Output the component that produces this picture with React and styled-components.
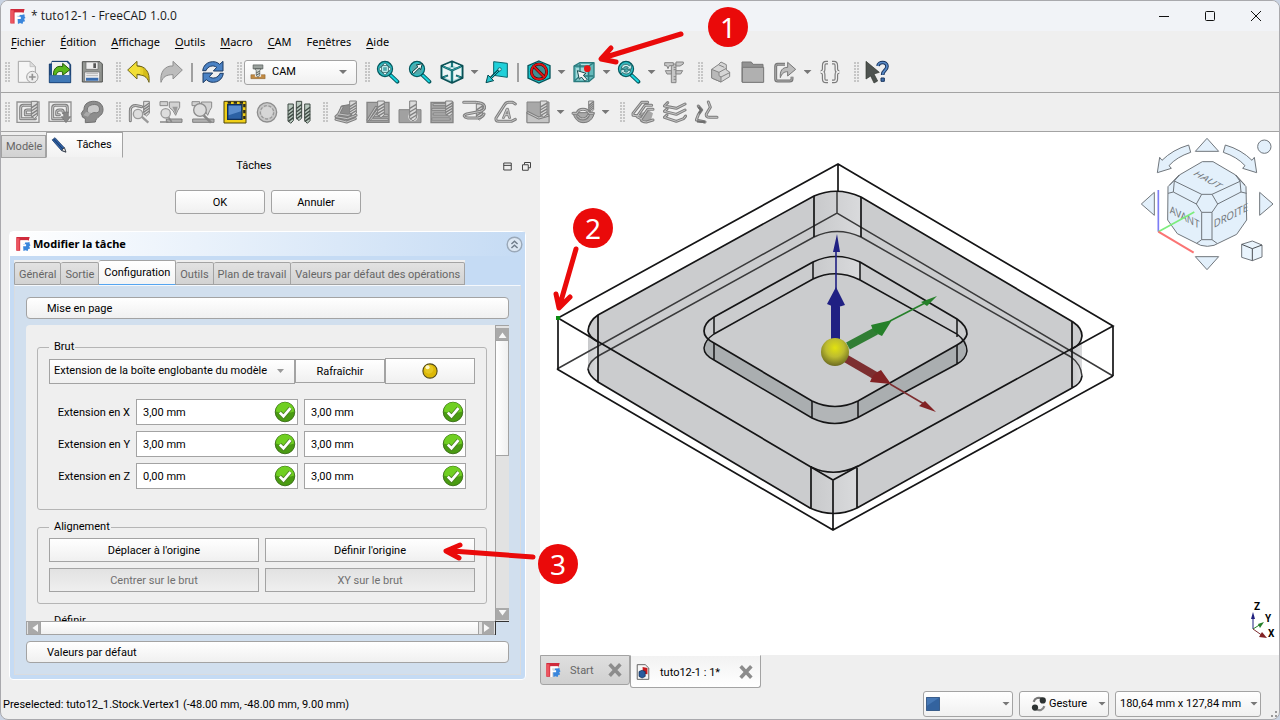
import React from 'react';
import styled, { createGlobalStyle, css } from "styled-components";

const menus = [
    ["", "F", "ichier"],
    ["", "É", "dition"],
    ["", "A", "ffichage"],
    ["", "O", "utils"],
    ["", "M", "acro"],
    ["", "C", "AM"],
    ["Fe", "n", "êtres"],
    ["", "A", "ide"],
];

const jobTabs = ["Général", "Sortie", "Configuration", "Outils", "Plan de travail", "Valeurs par défaut des opérations"];

const extensions = [
    { axis: "X", neg: "3,00 mm", pos: "3,00 mm" },
    { axis: "Y", neg: "3,00 mm", pos: "3,00 mm" },
    { axis: "Z", neg: "0,00 mm", pos: "3,00 mm" },
];

// Toolbar entries: "|" is a separator, ":" a grip, a trailing "+" adds a drop-down arrow
const viewTools = [":", "fit", "zoomSel", "iso+", "plane", "|", "drawStyle+", "pick+", "sync+", "caliper", ":", "part", "folder", "share+", "braces", ":", "whatsThis"];
const camTools = ["job", "exportJob", "sanity", ":", "inspect", "simulator", "simulatorGl", "stock", "loop", "bits", ":", "profile", "pocket", "drill", "face", "helix", "engrave", "pocket3d+", "vcarve+", ":", "dressup1", "dressup2", "dressup3"];

const Bit = ({ x, y, w = 18, h = 54, light }) => (
    <g stroke={light ? "#3f4a44" : "#808080"} strokeWidth="3">
        <path d={`M${x} ${y}h${w}v${h - 8}l${-w / 2} 8l${-w / 2} -8z`} fill={light ? "#b9c9bf" : "#dcdcdc"} />
        {[0.32, 0.5, 0.68, 0.86].map((k) => (
            <path key={k} d={`M${x} ${y + h * k + 3}l${w} -12`} strokeWidth="4" />
        ))}
    </g>
);

const Lens = ({ children }) => (
    <>
        <path d="M42 44L64 65" stroke="#075a60" strokeWidth="12" strokeLinecap="round" />
        <path d="M44 46L63 64" stroke="#18d3dc" strokeWidth="6" strokeLinecap="round" />
        <circle cx="27" cy="27" r="22" fill="#51a9ac" stroke="#075a60" strokeWidth="5" />
        <circle cx="27" cy="27" r="19" fill="none" stroke="#20cdd4" strokeWidth="3" />
        {children}
    </>
);

const Tube = ({ d }) => (
    <>
        <path d={d} fill="none" stroke="#808080" strokeWidth="9" strokeLinecap="round" strokeLinejoin="round" />
        <path d={d} fill="none" stroke="#c6c6c6" strokeWidth="3" strokeLinecap="round" strokeLinejoin="round" />
    </>
);

const icons = {
    newFile: (
        <>
            <path d="M7 4H42L58 20V67H7Z" fill="#f5f5f5" stroke="#a5a5a5" strokeWidth="3" />
            <path d="M42 4V20H58Z" fill="#ddd" stroke="#b5b5b5" strokeWidth="2" />
            <circle cx="49" cy="51" r="17" fill="#ededed" stroke="#a2a2a2" strokeWidth="3" />
            <path d="M49 41V61M39 51H59" stroke="#929292" strokeWidth="5" />
        </>
    ),
    open: (
        <>
            <path d="M4 12H12V4H60L68 14V68H4Z" fill="#1f4f8c" stroke="#123a6b" strokeWidth="3" />
            <path d="M12 6H56L64 14V46H12Z" fill="#f0f1f0" />
            <path d="M16 46C16 24 28 16 44 20V10L66 29L44 46V36C34 32 26 36 24 46Z" fill="#59b81b" stroke="#245b0b" strokeWidth="3" />
            <path d="M5 46H67V67H5Z" fill="#3f78b6" />
        </>
    ),
    save: (
        <>
            <path d="M7 5H60L67 12V66H7Z" fill="#939692" stroke="#4e504e" strokeWidth="3" strokeLinejoin="round" />
            <path d="M18 6H54V28H18Z" fill="#eee" stroke="#666" strokeWidth="2" />
            <path d="M40 10H48V24H40Z" fill="#555" />
            <path d="M14 36H59V64H14Z" fill="#f2f2f2" stroke="#666" strokeWidth="2" />
            <path d="M19 41H54M19 47H54" stroke="#b6b6b6" strokeWidth="3" />
            <path d="M18 53H55V62H18Z" fill="#386caf" />
        </>
    ),
    undo: (
        <>
            <path d="M28 18C54 16 70 36 66 67C60 50 50 44 28 44Z" fill="#d5bd18" stroke="#70661d" strokeWidth="3" />
            <path d="M2 30L30 4V18L44 20V44L30 43V57Z" fill="#f2df35" stroke="#70661d" strokeWidth="3" strokeLinejoin="round" />
            <path d="M42 21C49 23 50 30 48 44H40V22Z" fill="#e8d02a" />
        </>
    ),
    redo: <path d="M70 30L42 4V18C18 16 2 36 6 67C12 50 22 44 42 44V57Z" fill="#bcbcbc" stroke="#8e8e8e" strokeWidth="3" strokeLinejoin="round" />,
    refresh: (
        <g fill="#4b82c4" stroke="#1d3b63" strokeWidth="3" strokeLinejoin="round">
            <path d="M5 32C8 4 42 -2 56 13L66 4V33H37L47 22C37 14 20 18 15 32Z" />
            <path d="M67 40C64 68 30 74 16 59L6 68V39H35L25 50C35 58 52 54 57 40Z" />
        </g>
    ),
    cam: (
        <>
            <path d="M4 48H68V66H4Z" fill="#c18a43" stroke="#74501f" strokeWidth="2" />
            <path d="M22 44H50V57H22Z" fill="#eee" />
            <path d="M14 4H58V22H14Z" fill="#9aa19d" stroke="#4d5350" strokeWidth="3" />
            <path d="M22 22H50L44 30V50L36 60L28 50V30Z" fill="#d0d6d2" stroke="#4d5350" strokeWidth="3" />
            <path d="M28 40L44 32M28 50L44 42" stroke="#4d5350" strokeWidth="4" />
        </>
    ),
    fit: (
        <Lens>
            <path d="M27 8L35 17H19ZM27 46L35 37H19ZM8 27L17 19V35ZM46 27L37 19V35Z" fill="#e4fbfb" stroke="#0b3d40" strokeWidth="2" />
            <path d="M20 20H34V34H20Z" fill="none" stroke="#d7f5f5" strokeWidth="3" />
        </Lens>
    ),
    zoomSel: (
        <Lens>
            <path d="M12 36L30 20L25 15L43 11L38 29L34 24L17 41Z" fill="#f4f7f7" stroke="#0b3d40" strokeWidth="3" />
        </Lens>
    ),
    iso: (
        <>
            <path d="M36 4L68 17V54L36 69L4 54V17Z" fill="#9bd5d6" stroke="#0b5055" strokeWidth="5" strokeLinejoin="round" />
            <path d="M11 17L32 9V18L20 23ZM61 17L40 9V18L52 23ZM36 24L44 26L36 29L28 26Z" fill="#eef5f5" />
            <path d="M9 24L31 34V60L9 51ZM63 24L41 34V60L63 51Z" fill="#eef5f5" />
            <path d="M4 17L36 31L68 17M36 31V69M36 4V21M4 54L24 46M68 54L48 46" fill="none" stroke="#0b5055" strokeWidth="6" />
            <path d="M36 8V20M10 52L22 47M62 52L50 47M36 34V64M9 19L36 31L63 19" fill="none" stroke="#3dcfd5" strokeWidth="2" />
        </>
    ),
    plane: (
        <>
            <path d="M26 5L67 10V52L26 46Z" fill="#1fd0d9" stroke="#08656c" strokeWidth="3" />
            <path d="M44 28L14 57" stroke="#064a50" strokeWidth="8" />
            <path d="M42 30L16 56" stroke="#27c5cd" strokeWidth="3" />
            <path d="M3 68L9 45L26 62Z" fill="#27c5cd" stroke="#064a50" strokeWidth="3" />
            <circle cx="44" cy="28" r="5" fill="#b4f3f5" stroke="#064a50" strokeWidth="2" />
        </>
    ),
    drawStyle: (
        <>
            <path d="M36 3L69 17V54L36 69L3 54V17Z" fill="#16c5cd" stroke="#07545a" strokeWidth="4" />
            <circle cx="36" cy="35" r="23" fill="#3f8f93" stroke="#3b0505" strokeWidth="9" />
            <circle cx="36" cy="35" r="23" fill="none" stroke="#de1616" strokeWidth="6" />
            <path d="M21 20L51 50" stroke="#3b0505" strokeWidth="9" />
            <path d="M20 19L52 51" stroke="#de1616" strokeWidth="6" />
        </>
    ),
    pick: (
        <>
            <path d="M6 18L24 8H66V52L50 65H6Z" fill="#65b9bb" stroke="#2a7b7e" strokeWidth="4" strokeLinejoin="round" />
            <path d="M12 24H44V59H12Z" fill="#a5dadb" />
            <path d="M26 12H60L48 18H14Z" fill="#b5e2e3" />
            <path d="M6 18H50V65M50 18L66 8M24 12V48L8 62M24 48H64" fill="none" stroke="#2a7b7e" strokeWidth="4" />
            <path d="M16 32L42 40L34 46L45 58L39 64L28 51L22 58Z" fill="#f5f5f5" stroke="#184d50" strokeWidth="3" />
            <circle cx="46" cy="26" r="10" fill="#e71616" />
        </>
    ),
    sync: (
        <Lens>
            <path d="M13 25C14 13 31 9 37 18L43 13V27H29L34 22C27 17 21 20 19 25ZM41 31C39 43 24 45 17 37L12 42V29H25L21 34C28 39 33 36 35 31Z" fill="#d5f4f4" stroke="#08494d" strokeWidth="2" />
        </Lens>
    ),
    caliper: (
        <g fill="#c6c6c6" stroke="#858585" strokeWidth="3">
            <path d="M28 12H42V68H28Z" />
            <path d="M8 8H34V17H22L18 26L14 17H8ZM42 6H64V12L54 18H42ZM28 32H10L15 42H28ZM42 32H62L56 42H42Z" />
            <path d="M35 22H42M35 29H42M35 50H42M35 58H42" />
        </g>
    ),
    part: (
        <g stroke="#858585" strokeWidth="3" strokeLinejoin="round">
            <path d="M8 28L28 14L36 6L52 14V30L62 36V50L36 66L8 54Z" fill="#d6d6d6" />
            <path d="M8 28L30 37V47L36 51V66L8 54Z" fill="#b9b9b9" />
            <path d="M30 37L52 25M36 51L62 38M28 14L46 22" fill="none" />
        </g>
    ),
    folder: (
        <g stroke="#777" strokeWidth="3">
            <path d="M3 6H31L36 13H66V66H3Z" fill="#929292" />
            <path d="M4 22H68V67H4Z" fill="#b0b0b0" />
        </g>
    ),
    share: (
        <>
            <path d="M36 13H14Q8 13 8 20V57Q8 63 14 63H50Q57 63 57 57V50" fill="none" stroke="#777" strokeWidth="9" />
            <path d="M36 13H14Q8 13 8 20V57Q8 63 14 63H50Q57 63 57 57V50" fill="none" stroke="#a8a8a8" strokeWidth="3" />
            <path d="M22 53C20 32 28 22 44 22V7L68 28L44 48V35C34 35 26 40 22 53Z" fill="#bcbcbc" stroke="#777" strokeWidth="3" />
        </>
    ),
    braces: (
        <>
            <path d="M30 8H24Q17 8 17 17V28Q17 36 8 36Q17 36 17 44V56Q17 64 24 64H30M42 8H48Q55 8 55 17V28Q55 36 64 36Q55 36 55 44V56Q55 64 48 64H42" fill="none" stroke="#7c7c7c" strokeWidth="11" />
            <path d="M30 8H24Q17 8 17 17V28Q17 36 8 36Q17 36 17 44V56Q17 64 24 64H30M42 8H48Q55 8 55 17V28Q55 36 64 36Q55 36 55 44V56Q55 64 48 64H42" fill="none" stroke="#efefef" strokeWidth="4" />
        </>
    ),
    whatsThis: (
        <>
            <path d="M3 4L43 37L27 42L38 63L27 69L17 48L3 57Z" fill="#4e5350" stroke="#31362f" strokeWidth="2" />
            <path d="M39 18C40 5 66 3 66 19C66 33 53 30 53 45" fill="none" stroke="#19345d" strokeWidth="11" />
            <path d="M39 18C40 5 66 3 66 19C66 33 53 30 53 44" fill="none" stroke="#5889c6" strokeWidth="5" />
            <path d="M48 54H58V64H48Z" fill="#4271ae" stroke="#19345d" strokeWidth="3" />
        </>
    ),
    job: (
        <>
            <path d="M3 6H69V67H3Z" fill="#ececec" stroke="#929292" strokeWidth="4" />
            <Tube d="M14 55V24Q14 16 22 16H46M14 56H58M28 44V34Q28 30 34 30H48M28 44H46" />
            <Bit x={46} y={4} h={52} />
        </>
    ),
    exportJob: (
        <>
            <path d="M3 6H69V64H3Z" fill="#ececec" stroke="#929292" strokeWidth="4" />
            <Tube d="M44 56H14V24Q14 16 22 16H52Q58 16 58 24V36M34 44H26V36Q26 30 34 30H40Q46 30 46 38" />
            <path d="M47 36H61V50H68L54 68L40 50H47Z" fill="#888" stroke="#767676" strokeWidth="2" />
        </>
    ),
    sanity: (
        <>
            <path d="M16 68V56Q4 52 6 46L4 40L12 28C12 10 28 3 44 4C62 5 70 18 69 31C68 50 48 49 46 66Z" fill="#8d8d8d" stroke="#707070" strokeWidth="3" />
            <path d="M22 32C20 18 34 12 48 14C60 16 60 30 56 36C48 42 42 34 36 40C30 44 24 40 22 32Z" fill="#c9c9c9" stroke="#777" strokeWidth="3" />
            <path d="M18 36L33 38L24 50L10 46Z" fill="#aaa" />
        </>
    ),
    inspect: (
        <>
            <Tube d="M10 62V32Q10 15 30 17L44 20" />
            <Bit x={50} y={4} w={17} h={44} />
            <path d="M44 50L64 68" stroke="#9a9a9a" strokeWidth="7" />
            <circle cx="33" cy="42" r="14" fill="#ddd" stroke="#9a9a9a" strokeWidth="4" />
        </>
    ),
    simulator: (
        <>
            <path d="M3 5H26V17H3ZM31 6H62V22L56 32L50 46L42 32L31 22Z" fill="#d2d2d2" stroke="#8a8a8a" strokeWidth="3" />
            <path d="M40 20H56L50 42Z" fill="#999" />
            <path d="M22 57H69V67H22Z" fill="#b0b0b0" stroke="#808080" strokeWidth="3" />
            <circle cx="20" cy="40" r="14" fill="#ddd" stroke="#9b9b9b" strokeWidth="4" />
            <path d="M29 52L38 66M3 66H28" stroke="#888" strokeWidth="5" />
        </>
    ),
    simulatorGl: (
        <>
            <path d="M3 5H26V17H3ZM31 6H62V22L56 32L50 46L42 32L31 22Z" fill="#d2d2d2" stroke="#8a8a8a" strokeWidth="3" />
            <path d="M5 57H69V67H5Z" fill="#b0b0b0" stroke="#808080" strokeWidth="3" />
            <path d="M38 46L60 68" stroke="#888" strokeWidth="8" />
            <circle cx="27" cy="30" r="19" fill="#ddd" stroke="#8c8c8c" strokeWidth="4" />
        </>
    ),
    stock: (
        <>
            <path d="M3 4H69V69H3Z" fill="#f0cf19" stroke="#4b420b" strokeWidth="3" />
            <path d="M14 8H64V57" fill="none" stroke="#2b2b20" strokeWidth="7" strokeDasharray="10 8" />
            <path d="M14 14H57V58H14Z" fill="#2c61a4" stroke="#102f59" strokeWidth="4" />
            <path d="M17 17H54V34L17 46Z" fill="#5b8dcc" />
        </>
    ),
    loop: (
        <>
            <circle cx="36" cy="37" r="29" fill="#c8c8c8" stroke="#8d8d8d" strokeWidth="4" />
            <circle cx="36" cy="37" r="20" fill="none" stroke="#999" strokeWidth="4" strokeDasharray="9 5" />
            <circle cx="36" cy="37" r="17" fill="#d6d6d6" />
        </>
    ),
    bits: (
        <>
            <Bit light x={3} y={12} w={16} h={58} />
            <Bit light x={28} y={4} w={16} h={58} />
            <Bit light x={53} y={12} w={16} h={58} />
        </>
    ),
    profile: (
        <>
            <path d="M22 18L56 12V46L40 56L10 52Z" fill="#8c8c8c" stroke="#777" strokeWidth="3" />
            <Tube d="M24 22L14 42L42 46L64 38M14 42L6 50L40 56L66 46M6 58L38 66L64 56" />
            <Bit x={47} y={3} w={20} h={44} />
        </>
    ),
    pocket: (
        <>
            <path d="M3 7H69V67H3Z" fill="#a6a6a6" stroke="#848484" strokeWidth="4" />
            <Tube d="M6 60L30 22M14 58L38 26M28 46H64M18 58H64" />
            <Bit x={35} y={3} w={20} h={50} />
        </>
    ),
    drill: (
        <>
            <path d="M3 29H69V68H3Z" fill="#a1a1a1" stroke="#858585" strokeWidth="3" />
            <circle cx="45" cy="50" r="14" fill="#eee" />
            <Bit x={35} y={3} w={20} h={60} />
        </>
    ),
    face: (
        <>
            <path d="M3 7H69V68H3Z" fill="#a6a6a6" stroke="#848484" strokeWidth="4" />
            <Tube d="M12 14H48M8 28H48M12 42H56M8 57H58" />
            <Bit x={47} y={3} w={20} h={46} />
        </>
    ),
    helix: (
        <>
            <Bit x={43} y={12} w={18} h={48} />
            <Tube d="M5 7H40C74 8 74 28 56 34L14 42C2 46 6 52 18 54H48C58 52 64 48 66 42" />
        </>
    ),
    engrave: (
        <>
            <Tube d="M64 12L56 7H44Q36 7 32 14L6 54Q4 64 14 64H52L64 58" />
            <path d="M25 55L37 25H43L50 55H44L42 47H34L31 55ZM36 41H42L40 34Z" fill="#c6c6c6" stroke="#858585" strokeWidth="3" />
        </>
    ),
    pocket3d: (
        <>
            <path d="M3 6H69V68H3Z" fill="#a8a8a8" stroke="#858585" strokeWidth="3" />
            <path d="M3 36L36 56L69 48V68H3Z" fill="#c5c5c5" stroke="#858585" strokeWidth="3" />
            <Tube d="M6 38L38 54L66 46" />
            <Bit x={43} y={3} w={20} h={48} />
        </>
    ),
    vcarve: (
        <>
            <path d="M6 38H70C66 58 54 68 36 68C20 67 10 56 6 38Z" fill="#aaa" stroke="#777" strokeWidth="3" />
            <Tube d="M6 40H18C22 24 50 24 54 40H66M20 48C26 60 46 60 52 46" />
            <Bit x={53} y={3} w={15} h={34} />
        </>
    ),
    dressup1: (
        <>
            <path d="M26 40L54 32L66 40L60 60L40 64L22 52Z" fill="#a6a6a6" />
            <Tube d="M50 7H32L6 40V46L28 48M62 16H42L18 50L30 56M66 28H50L30 58Q32 66 46 66L66 60" />
        </>
    ),
    dressup2: <Tube d="M14 8L4 18L40 25L66 12M12 27L4 34L40 43L66 30M12 45L4 52L40 64L62 56L68 48" />,
    dressup3: (
        <>
            <Tube d="M10 18L20 30L10 44L4 60L30 66M40 6L46 22L34 42Q32 52 44 52H66" />
            <path d="M6 64L30 66M10 20L18 30L12 40" stroke="#6f6f6f" strokeWidth="7" />
        </>
    ),
    logo: (
        <>
            <path d="M6 4H66L62 20H26V66H6Z" fill="#cf2a3b" />
            <path d="M6 10H20V64H6Z" fill="#ec5560" />
            <path d="M36 36H44L46 28H66V36L70 42L64 46L68 56L60 58L57 68L47 64L38 68Z" fill="#3a86dc" />
            <path d="M28 67V24H58M28 42H50" stroke="#fff" strokeWidth="9" />
        </>
    ),
    pencil: (
        <>
            <path d="M5 13L18 3L60 48L67 68L47 61Z" fill="#2d5fa5" stroke="#16325b" strokeWidth="3" />
            <path d="M12 9L53 54" stroke="#17365f" strokeWidth="4" />
            <path d="M48 60L60 48L67 68Z" fill="#f0f0f0" stroke="#222" strokeWidth="3" />
        </>
    ),
    check: (
        <>
            <circle cx="36" cy="36" r="32" fill="#4a9b12" stroke="#386c15" strokeWidth="3" />
            <path d="M6 34A30 30 0 0 1 66 34Q36 46 6 34Z" fill="#70cf22" />
            <path d="M19 38L31 50L54 23" fill="none" stroke="#4c7f24" strokeWidth="14" />
            <path d="M19 38L31 50L54 23" fill="none" stroke="#fff" strokeWidth="9" />
        </>
    ),
    ball: (
        <>
            <circle cx="36" cy="36" r="32" fill="#dcb808" stroke="#544b16" strokeWidth="5" />
            <circle cx="31" cy="28" r="20" fill="#e6c822" />
            <circle cx="25" cy="19" r="9" fill="#fdf7c8" />
        </>
    ),
    collapse: (
        <>
            <circle cx="36" cy="36" r="31" fill="#dce7f3" stroke="#9aa8b8" strokeWidth="6" />
            <path d="M23 34L36 22L49 34M23 51L36 39L49 51" fill="none" stroke="#6f7c8a" strokeWidth="6" />
        </>
    ),
    document: (
        <>
            <path d="M10 3H46L62 18V69H10Z" fill="#f7f7f7" stroke="#555" strokeWidth="4" />
            <path d="M34 14L56 18V46L36 44Z" fill="#c7191d" />
            <path d="M18 34L32 28L46 34V56L32 63L18 56Z" fill="#285b9e" stroke="#0e2a50" strokeWidth="3" />
        </>
    ),
    close: <path d="M12 10L60 62M60 10L12 62" stroke="#8c8c8c" strokeWidth="16" />,
    gesture: (
        <>
            <path d="M12 26C18 8 36 4 50 12" fill="none" stroke="#777" strokeWidth="10" />
            <path d="M60 46C54 64 38 68 24 60" fill="none" stroke="#888" strokeWidth="10" />
            <circle cx="53" cy="20" r="14" fill="#2c3232" />
            <circle cx="18" cy="52" r="14" fill="#2c3232" />
        </>
    ),
    blueSquare: (
        <>
            <path d="M2 2H70V70H2Z" fill="#33639f" stroke="#1b4273" strokeWidth="4" />
            <path d="M5 5H66L5 45Z" fill="#4678b5" />
        </>
    ),
    restore: <path d="M20 20V4H68V46H50M4 22H50V66H4Z" fill="none" stroke="#444" strokeWidth="8" />,
    dock: <path d="M6 8H66V64H6ZM6 27H66" fill="none" stroke="#444" strokeWidth="8" />,
};

const Icon = ({ name, size = 24 }) => (
    <Svg width={size} height={size} viewBox="0 0 72 72" fill="none" aria-hidden="true">{icons[name]}</Svg>
);

const Tools = ({ items }) => items.map((item, index) => {
    if (item === "|") return <Separator key={index} />;
    if (item === ":") return <Grip key={index} />;
    const name = item.replace("+", "");
    return (
        <React.Fragment key={index}>
            <ToolButton aria-label={name}><Icon name={name} /></ToolButton>
            {item !== name && <ArrowButton aria-label={`${name} menu`}><Arrow /></ArrowButton>}
        </React.Fragment>
    );
});

const Scene = () => (
    <SceneSvg viewBox="540 132 739 523" role="img" aria-label="Pièce et brut">
        <defs>
            <linearGradient id="wall" x1="0" x2="1">
                <stop offset="0" stopColor="#c8c9cb" />
                <stop offset="1" stopColor="#d9dadc" />
            </linearGradient>
            <radialGradient id="sphere" cx="0.5" cy="0.35" r="0.65">
                <stop offset="0" stopColor="#e2e20f" />
                <stop offset="0.5" stopColor="#bdbc30" />
                <stop offset="1" stopColor="#6d6c22" />
            </radialGradient>
        </defs>
        <path d="M598 315L814 196Q837 186 861 197L1073 322Q1082 328 1082 336V376Q1081 384 1072 388L857 508Q834 519 810 508L598 382Q589 376 588 369V331Q589 321 598 315Z" fill="#cbccce" />
        <path d="M588 331Q590 338 598 342V382Q589 377 588 369Z" fill="url(#wall)" />
        <path d="M1082 336Q1080 345 1072 349V388Q1081 384 1082 376Z" fill="url(#wall)" />
        <path d="M814 196Q837 186 861 197V237Q837 226 814 237Z" fill="url(#wall)" />
        <path d="M811 467Q834 479 857 467V508Q834 519 810 508Z" fill="url(#wall)" />
        <path d="M813 262Q836 251 860 262V280Q836 268 813 279Z" fill="url(#wall)" />
        <path d="M708 338Q710 341 714 343L812 401Q835 412 858 401L957 345Q962 342 964 338Q973 355 957 364L857 418Q835 429 812 418L714 360Q698 350 708 338Z" fill="#aaaeb0" />
        <path d="M812 401Q835 412 858 401V418Q835 429 812 418Z" fill="#b2b5b7" />
        <g fill="none" stroke="#3a3a3b" strokeWidth="1.5">
            <path d="M557 369L837 213L1113 376M837 213V191" />
            <path d="M588 369Q589 361 600 355L814 237Q837 226 861 237L1071 357Q1081 364 1082 376" />
        </g>
        <g fill="none" stroke="#151516" strokeWidth="1.7">
            <path d="M838 164L558 318L833 480L1113 326ZM557 369L833 530L1113 376M838 164V191M558 318V369M833 480V530M1113 326V376" />
            <path d="M811 467Q834 478 858 466M1072 349Q1081 345 1082 336Q1082 328 1073 322L861 197Q837 186 814 196L598 315Q589 321 588 331Q589 337 598 342" />
            <path d="M588 369Q589 376 598 382L810 508Q834 519 857 508L1072 388Q1081 384 1082 376M598 315V382M814 196V237M861 197V237M1072 322V388M811 466V508M857 468V508" />
            <path d="M714 317L813 262Q836 251 860 262L957 319Q967 326 967 334Q966 340 957 345L858 401Q835 412 812 401L714 343Q704 338 704 331Q704 323 714 317Z" />
            <path d="M714 334L813 279Q836 268 860 280L957 334Q967 342 967 351Q966 359 957 364L857 418Q835 429 812 418L714 360Q704 355 704 348Q705 340 714 334ZM714 317V334M714 343V360M813 262V279M860 262V280M957 319V337M957 345V364M812 401V418M858 401V418" strokeWidth="1.5" />
        </g>
        <g fill="#202083" stroke="#202083">
            <path d="M836 290V250" strokeWidth="1.6" />
            <path d="M831 341V304H840V341ZM827 304L836 287L845 305Q836 309 827 304ZM833 252L837 234L840 252Z" stroke="none" />
        </g>
        <g fill="#26802a" stroke="#26802a">
            <path d="M890 321L925 303" strokeWidth="1.6" />
            <path d="M848 346L876 331" strokeWidth="8" stroke="#317e34" />
            <path d="M871 325L892 320L882 336Q873 333 871 325ZM921 302L937 296L927 306Z" stroke="none" />
        </g>
        <g fill="#822224" stroke="#7d2e30">
            <path d="M890 384L924 404" strokeWidth="1.6" />
            <path d="M845 358L876 376" strokeWidth="8" />
            <path d="M881 370L891 384L870 382Q873 373 881 370ZM925 401L936 412L919 406Z" stroke="none" />
        </g>
        <circle cx="835" cy="352" r="14" fill="url(#sphere)" />
        <path d="M556 316h4v4h-4z" fill="#0c8a12" />
    </SceneSvg>
);

const NavCube = () => (
    <NavSvg width="145" height="140" viewBox="30 30 435 420" aria-hidden="true">
        <g fill="#e3f0fb" stroke="#70767c" strokeWidth="3" strokeLinejoin="round">
            <path d="M261 40L296 79H226ZM261 434L296 395H226ZM64 237L103 202V271ZM459 237L419 202V271Z" />
            <path d="M206 60L212 82Q170 96 147 122L154 130L112 143L119 97L126 106Q158 74 206 60Z" />
            <path d="M316 60L310 82Q352 96 375 122L368 130L410 143L403 97L396 106Q364 74 316 60Z" />
            <circle cx="433" cy="65" r="20" />
            <path d="M247 110H279L347 150L378 185L380 285L350 328L282 361Q262 367 242 361L172 326L143 285L144 185L178 150Z" />
            <path d="M178 150L163 168L245 208H276L360 169L347 150M163 168L160 201L229 237L245 208M276 208L293 237L363 201L360 169M160 201L144 205M363 201L380 205M229 237L245 262H276L293 237M245 262V344H276V262M245 344L230 355M276 344L291 355M178 150L149 180M347 150L375 180" fill="none" />
            <path d="M365 358L397 348L426 360V396L397 407L365 397Z" fill="#e9f4fd" />
            <path d="M365 358L397 371L426 360M397 371V407" fill="none" stroke="#4b4f53" />
        </g>
        <NavText transform="matrix(.87 .48 -.75 .43 217 148)">HAUT</NavText>
        <NavText transform="matrix(.87 .46 0 1 149 264)">AVANT</NavText>
        <NavText transform="matrix(.87 -.44 0 1 281 309)">DROITE</NavText>
        <path d="M115 195V320" stroke="#7d7df5" strokeWidth="5" />
        <path d="M115 320L223 261" stroke="#7ced7c" strokeWidth="5" />
        <path d="M115 320L221 383" stroke="#fa7474" strokeWidth="6" />
    </NavSvg>
);

const App = () => {
    return (
        <>
            <GlobalStyle />
            <Window>
                <TitleBar>
                    <Icon name="logo" size={17} />
                    <Title>* tuto12-1 - FreeCAD 1.0.0</Title>
                    <WindowButton aria-label="Réduire"><svg width="12" height="12"><path d="M1 6.5H11" stroke="#111" /></svg></WindowButton>
                    <WindowButton aria-label="Agrandir"><svg width="12" height="12"><rect x="1.5" y="1.5" width="9" height="9" rx="1" fill="none" stroke="#111" /></svg></WindowButton>
                    <WindowButton aria-label="Fermer"><svg width="12" height="12"><path d="M1 1L11 11M11 1L1 11" stroke="#111" /></svg></WindowButton>
                </TitleBar>
                <MenuBar>
                    {menus.map(([before, key, after]) => (
                        <MenuItem key={key + after}>{before}<u>{key}</u>{after}</MenuItem>
                    ))}
                </MenuBar>
                <Toolbar>
                    <Grip $first />
                    <Tools items={["newFile", "open", "save", ":", "undo", "redo", "|", "refresh", ":"]} />
                    <Workbench>
                        <Icon name="cam" size={16} />
                        <Select aria-label="Atelier" defaultValue="CAM"><option>CAM</option></Select>
                        <Arrow />
                    </Workbench>
                    <Tools items={viewTools} />
                </Toolbar>
                <Toolbar>
                    <Grip $first />
                    <Tools items={camTools} />
                </Toolbar>

                <Main>
                    <Panel>
                        <PanelTabs role="tablist">
                            <PanelTab role="tab">Modèle</PanelTab>
                            <PanelTab role="tab" $active><Icon name="pencil" size={16} />Tâches</PanelTab>
                        </PanelTabs>
                        <PanelTitle>
                            <span>Tâches</span>
                            <PanelButtons>
                                <IconButton aria-label="Ancrer"><Icon name="dock" size={9} /></IconButton>
                                <IconButton aria-label="Détacher"><Icon name="restore" size={9} /></IconButton>
                            </PanelButtons>
                        </PanelTitle>
                        <DialogButtons>
                            <Button>OK</Button>
                            <Button>Annuler</Button>
                        </DialogButtons>
                        <TaskBox>
                            <TaskHeader>
                                <Icon name="logo" size={16} />
                                <h2>Modifier la tâche</h2>
                                <IconButton aria-label="Replier"><Icon name="collapse" size={17} /></IconButton>
                            </TaskHeader>
                            <JobTabs role="tablist">
                                {jobTabs.map((tab) => (
                                    <JobTab key={tab} role="tab" $active={tab === "Configuration"}>{tab}</JobTab>
                                ))}
                            </JobTabs>
                            <JobPage>
                                <SectionButton>Mise en page</SectionButton>
                                <ScrollArea>
                                    <ScrollView>
                                        <Group $tall>
                                            <legend>Brut</legend>
                                            <StockRow>
                                                <StockSelect>
                                                    <Select aria-label="Type de brut"><option>Extension de la boîte englobante du modèle</option></Select>
                                                    <Arrow $light />
                                                </StockSelect>
                                                <FlatButton>Rafraîchir</FlatButton>
                                                <FlatButton $high aria-label="Couleur"><Icon name="ball" size={16} /></FlatButton>
                                            </StockRow>
                                            {extensions.map(({ axis, neg, pos }) => (
                                                <FieldRow key={axis}>
                                                    <label htmlFor={`ext${axis}`}>Extension en {axis}</label>
                                                    <Field><input id={`ext${axis}`} defaultValue={neg} /><Icon name="check" size={22} /></Field>
                                                    <Field><input aria-label={`Extension en ${axis} positif`} defaultValue={pos} /><Icon name="check" size={22} /></Field>
                                                </FieldRow>
                                            ))}
                                        </Group>
                                        <Group>
                                            <legend>Alignement</legend>
                                            <AlignGrid>
                                                <FlatButton>Déplacer à l'origine</FlatButton>
                                                <FlatButton>Définir l'origine</FlatButton>
                                                <FlatButton disabled>Centrer sur le brut</FlatButton>
                                                <FlatButton disabled>XY sur le brut</FlatButton>
                                            </AlignGrid>
                                        </Group>
                                        <Group>
                                            <legend>Définir</legend>
                                        </Group>
                                    </ScrollView>
                                    <VerticalBar>
                                        <ScrollEnd $dir="up" />
                                        <VerticalThumb />
                                        <ScrollEnd $dir="down" />
                                    </VerticalBar>
                                    <HorizontalBar>
                                        <ScrollEnd $dir="left" />
                                        <HorizontalThumb />
                                        <ScrollEnd $dir="right" />
                                    </HorizontalBar>
                                    <ScrollCorner />
                                </ScrollArea>
                                <SectionButton>Valeurs par défaut</SectionButton>
                            </JobPage>
                        </TaskBox>
                    </Panel>

                    <Workspace>
                        <Viewport>
                            <Scene />
                            <NavCube />
                            <AxisSvg width="28" height="48" viewBox="0 0 28 48" aria-hidden="true">
                                <path d="M3 32V20" stroke="#20207f" />
                                <path d="M1 22L3 15L5 22Z" fill="#20207f" />
                                <path d="M3 32L11 27" stroke="#26802a" />
                                <path d="M8 27L14 25L10 31Z" fill="#26802a" />
                                <path d="M3 32L13 39" stroke="#7d2e30" />
                                <path d="M12 35L17 41L9 40Z" fill="#822224" />
                                <text x="4" y="13">Z</text>
                                <text x="15" y="25">Y</text>
                                <text x="18" y="40">X</text>
                            </AxisSvg>
                        </Viewport>
                        <DocTabs role="tablist">
                            <DocTab role="tab">
                                <Icon name="logo" size={16} /><span>Start</span><Icon name="close" size={16} />
                            </DocTab>
                            <DocTab role="tab" $active>
                                <Icon name="document" size={16} /><span>tuto12-1 : 1*</span><Icon name="close" size={16} />
                            </DocTab>
                        </DocTabs>
                    </Workspace>
                </Main>

                <StatusBar>
                    <p>Preselected: tuto12_1.Stock.Vertex1 (-48.00 mm, -48.00 mm, 9.00 mm)</p>
                    <StatusButton $width={90} aria-label="Notifications"><Icon name="blueSquare" size={14} /><Arrow /></StatusButton>
                    <StatusButton $width={90} $indent={11}><Icon name="gesture" size={16} /><span>Gesture</span><Arrow /></StatusButton>
                    <StatusButton $width={146} $indent={4}><span>180,64 mm x 127,84 mm</span><Arrow /></StatusButton>
                    <SizeGrip />
                </StatusBar>

                <Annotations aria-hidden="true">
                    <path d="M681 34L606 57M611 48L601 59L616 62" />
                    <path d="M576 249L561 301M556 294L559 308L570 297" />
                    <path d="M533 557L452 551M460 545L446 551L459 558" />
                </Annotations>
                <Callout $x={708} $y={7}>1</Callout>
                <Callout $x={573} $y={208}>2</Callout>
                <Callout $x={538} $y={544}>3</Callout>
            </Window>
        </>
    )
}

export default App;

const GlobalStyle = createGlobalStyle`
  * {
    box-sizing: border-box;
  }

  body {
    margin: 0;
    background: #c9d3e3;
  }

  body, button, input, select {
    font-family: Roboto, "Noto Sans", sans-serif;
    font-size: 11px;
    line-height: 14px;
    color: #000;
  }

  button, input, select, fieldset, legend, p, h1, h2 {
    margin: 0;
    padding: 0;
    border: 0;
    background: none;
    font-weight: normal;
  }
`

const Window = styled.div`
  position: relative;
  display: flex;
  flex-direction: column;
  height: 100vh;
  min-height: 640px;
  min-width: 1000px;
  overflow: hidden;
  background: #efefef;
  border: 1px solid #a9a9ad;
  border-radius: 8px;
`

const Svg = styled.svg`
  display: block;
  flex: none;
`

const TitleBar = styled.header`
  display: flex;
  align-items: center;
  flex: none;
  height: 30px;
  padding-left: 8px;
  background: #f1f3f7;
`

const Title = styled.h1`
  flex: 1;
  padding-left: 5px;
  font-family: "Open Sans", "Noto Sans", sans-serif;
  font-size: 12px;
  color: #1a1a1a;
`

const WindowButton = styled.button`
  display: flex;
  align-items: center;
  justify-content: center;
  width: 46px;
  height: 30px;
`

const MenuBar = styled.nav`
  display: flex;
  align-items: center;
  flex: none;
  height: 22px;
  padding-left: 3px;
`

const MenuItem = styled.button`
  padding: 0 8px 0 7px;
  font-family: "Noto Sans", "Open Sans", sans-serif;

  u {
    text-underline-offset: 2px;
  }
`

const Toolbar = styled.div`
  display: flex;
  align-items: center;
  flex: none;
  height: 39px;
  border-bottom: 1px solid #a3a3a3;

  ${MenuBar} + & {
    height: 40px;
    padding-bottom: 1px;
  }
`

const Grip = styled.span`
  flex: none;
  width: ${({ $first }) => ($first ? 11 : 15)}px;
  height: 20px;
  background: radial-gradient(circle at 1px 1px, #c6c6c6 1px, transparent 1px) 0 0 / 3px 3px content-box;
  padding-left: ${({ $first }) => ($first ? 4 : 8)}px;
  padding-right: 2px;
`

const Separator = styled.span`
  flex: none;
  width: 2px;
  height: 19px;
  margin: 0 4px;
  background: #a0a0a0;
`

const ToolButton = styled.button`
  display: flex;
  justify-content: center;
  flex: none;
  width: 32px;
`

const ArrowButton = styled.button`
  display: flex;
  justify-content: center;
  flex: none;
  width: 13px;
`

const Arrow = styled.span`
  flex: none;
  width: ${({ $light }) => ($light ? 7 : 8)}px;
  height: 4px;
  background: ${({ $light }) => ($light ? "#999" : "#777")};
  clip-path: polygon(0 0, 100% 0, 50% 100%);
`

const raised = css`
  background: linear-gradient(#fff, #f0f0f0);
  border: 1px solid #a3a3a3;
`

const Workbench = styled.span`
  ${raised}
  display: flex;
  align-items: center;
  flex: none;
  gap: 6px;
  width: 113px;
  height: 25px;
  padding: 0 9px 0 5px;
  border-radius: 3px;
`

const Select = styled.select`
  appearance: none;
  flex: 1;
  min-width: 0;
  outline: none;
`

const Main = styled.main`
  display: flex;
  flex: 1;
  min-height: 0;
`

const Panel = styled.section`
  display: flex;
  flex-direction: column;
  flex: none;
  width: 539px;
  padding-bottom: 8px;
`

const PanelTabs = styled.div`
  display: flex;
  align-items: flex-end;
  height: 26px;
`

const PanelTab = styled.button`
  display: flex;
  align-items: center;
  gap: 9px;
  height: 23px;
  padding: 1px 3px 0 4px;
  border: 1px solid #a3a3a3;
  background: linear-gradient(#e2e2e2, #d2d2d2);
  color: #666;

  ${({ $active }) => $active && css`
    height: 26px;
    padding: 0 10px 0 4px;
    background: linear-gradient(#fff, #f2f2f2);
    border-bottom-color: #efefef;
    color: #000;
  `}
`

const PanelTitle = styled.div`
  display: flex;
  align-items: center;
  height: 16px;

  > span {
    flex: 1;
    padding-left: 4px;
    text-align: center;
  }
`

const PanelButtons = styled.div`
  display: flex;
  gap: 10px;
  padding-right: 9px;
`

const IconButton = styled.button`
  display: flex;
`

const DialogButtons = styled.div`
  display: flex;
  justify-content: center;
  gap: 6px;
  padding: 16px 5px 17px 0;
`

const Button = styled.button`
  ${raised}
  width: 90px;
  height: 24px;
  padding-top: 2px;
  border-radius: 3px;
`

const TaskBox = styled.section`
  display: flex;
  flex-direction: column;
  flex: 1;
  min-height: 0;
  margin: 0 14px 0 8px;
  padding: 0 4px 4px;
  border: 1px solid #fff;
  border-radius: 4px;
  background: #c5dbf4;
`

const TaskHeader = styled.header`
  display: flex;
  align-items: center;
  gap: 2px;
  height: 24px;
  margin: 0 -4px;
  padding: 0 2px 0 5px;
  background: linear-gradient(90deg, #fff, #c5dbf4);

  h2 {
    flex: 1;
    font-family: "Noto Sans", "Open Sans", sans-serif;
    font-size: 11px;
    font-weight: bold;
  }
`

const JobTabs = styled.div`
  display: flex;
  align-items: flex-end;
  align-self: flex-start;
  flex: none;
  height: 25px;
  margin-top: 4px;
  background: #efefef;
`

const JobTab = styled.button`
  height: 23px;
  padding: 2px 4px 0;
  border: 1px solid #a3a3a3;
  border-radius: 2px 2px 0 0;
  background: linear-gradient(#e2e2e2, #d2d2d2);
  color: #666;
  white-space: nowrap;

  & + & {
    border-left: 0;
  }

  ${({ $active }) => $active && css`
    height: 25px;
    padding: 0 5px;
    background: linear-gradient(#fff, #f4f4f4);
    border-bottom-color: #55a5f0;
    color: #000;
  `}
`

const JobPage = styled.div`
  display: flex;
  flex-direction: column;
  flex: 1;
  gap: 6px;
  min-height: 0;
  padding: 11px;
  border: 1px solid #dadcdf;
  border-top-color: #f5f8fc;
  background: #d1dfee;
`

const SectionButton = styled.button`
  ${raised}
  flex: none;
  height: 22px;
  padding: 2px 0 0 20px;
  border-radius: 4px;
  text-align: left;
`

const ScrollArea = styled.div`
  display: grid;
  grid-template: minmax(0, 1fr) 14px / minmax(0, 1fr) 14px;
  flex: 1;
  min-height: 0;
`

const ScrollView = styled.div`
  display: flex;
  flex-direction: column;
  gap: 10px;
  overflow: hidden;
  padding: 15px 8px 0 11px;
  border-radius: 4px 0 0 0;
  background: #efefef;
`

const Group = styled.fieldset`
  flex: none;
  min-width: 0;
  height: ${({ $tall }) => ($tall ? 170 : 84)}px;
  padding: 4px 11px 0;
  border: 1px solid #b5b5b5;
  border-radius: 3px;

  legend {
    padding: 0 1px 0 5px;
  }
`

const StockRow = styled.div`
  display: flex;
  align-items: center;
  height: 26px;
  margin-bottom: 15px;
`

const StockSelect = styled.span`
  ${raised}
  display: flex;
  align-items: center;
  flex: 1;
  min-width: 0;
  height: 25px;
  padding: 0 10px 0 4px;
`

const FlatButton = styled.button`
  ${raised}
  display: flex;
  align-items: center;
  justify-content: center;
  min-width: 90px;
  height: ${({ $high }) => ($high ? 26 : 24)}px;
  padding-top: ${({ $high }) => ($high ? 0 : 2)}px;

  &:disabled {
    background: linear-gradient(#e2e2e2, #efefef);
    color: #707070;
  }
`

const FieldRow = styled.div`
  display: grid;
  grid-template-columns: 81px minmax(0, 1fr) minmax(0, 1fr);
  align-items: center;
  gap: 6px;
  height: 26px;
  margin: 0 9px 6px 0;

  label {
    padding-top: 2px;
    text-align: right;
  }
`

const Field = styled.div`
  display: flex;
  align-items: center;
  height: 26px;
  padding: 0 1px 0 6px;
  border: 1px solid #a3a3a3;
  background: #fff;

  input {
    flex: 1;
    min-width: 0;
    padding-top: 2px;
    outline: none;
  }
`

const AlignGrid = styled.div`
  display: grid;
  grid-template-columns: 1fr 1fr;
  gap: 6px;
`

const VerticalBar = styled.div`
  display: flex;
  flex-direction: column;
  padding: 2px 0 1px;
  border: 1px solid #a3a3a3;
  border-width: 1px 0 0 1px;
  background: #e2e2e2;
`

const HorizontalBar = styled.div`
  display: flex;
  padding: 0 1px;
  border: 1px solid #a3a3a3;
  border-width: 1px 0 1px 1px;
  background: #e2e2e2;
`

const ScrollEnd = styled.span`
  display: flex;
  align-items: center;
  justify-content: center;
  flex: none;
  min-width: 12px;
  min-height: 12px;
  background: #a9a9a9;

  &::before {
    content: "";
    width: 8px;
    height: 8px;
    background: #f8f8f8;
    clip-path: ${({ $dir }) => ({
        up: "polygon(50% 30%, 100% 100%, 0 100%)",
        down: "polygon(50% 70%, 100% 0, 0 0)",
        left: "polygon(30% 50%, 100% 0, 100% 100%)",
        right: "polygon(70% 50%, 0 0, 0 100%)",
    })[$dir]};
  }
`

const VerticalThumb = styled.span`
  height: 116px;
  margin-bottom: auto;
  border: 1px solid #a3a3a3;
  border-width: 1px 1px 1px 0;
  background: linear-gradient(90deg, #fff, #f0f0f0);
`

const HorizontalThumb = styled.span`
  flex: 1;
  margin-right: 3px;
  border: 1px solid #a3a3a3;
  border-width: 0 1px;
  background: linear-gradient(#fff, #f0f0f0);
`

const ScrollCorner = styled.span`
  border: 1px solid #333;
  border-width: 1px 0 0 1px;
`

const Workspace = styled.section`
  display: flex;
  flex-direction: column;
  flex: 1;
  min-width: 0;
`

const Viewport = styled.div`
  position: relative;
  flex: 1;
  min-height: 0;
  background: #fff;
`

const SceneSvg = styled.svg`
  display: block;
  width: 100%;
  height: 100%;
`

const NavSvg = styled.svg`
  position: absolute;
  top: 3px;
  right: 4px;
`

const NavText = styled.text`
  font-family: "Noto Sans", sans-serif;
  font-size: 33px;
  fill: #74787d;
`

const AxisSvg = styled.svg`
  position: absolute;
  right: 1px;
  bottom: 10px;

  text {
    font-size: 10px;
    font-weight: bold;
  }
`

const DocTabs = styled.div`
  display: flex;
  align-items: flex-start;
  flex: none;
  height: 33px;
`

const DocTab = styled.button`
  display: flex;
  align-items: center;
  gap: 9px;
  width: 90px;
  height: 30px;
  padding: 0 6px 0 4px;
  border: 1px solid #a3a3a3;
  border-radius: 0 0 3px 3px;
  background: linear-gradient(#dfdfdf, #d0d0d0);
  color: #666;

  span {
    flex: 1;
    padding-top: 2px;
    text-align: left;
    white-space: nowrap;
  }

  ${({ $active }) => $active && css`
    width: 131px;
    height: 33px;
    border-top-color: #fff;
    background: linear-gradient(#f2f2f2, #fff);
    color: #000;
  `}
`

const StatusBar = styled.footer`
  display: flex;
  align-items: center;
  flex: none;
  gap: 6px;
  height: 31px;
  padding-left: 2px;

  p {
    flex: 1;
    padding-top: 2px;
  }
`

const StatusButton = styled.button`
  ${raised}
  display: flex;
  align-items: center;
  gap: 2px;
  width: ${({ $width }) => $width}px;
  height: 26px;
  padding: 0 2px 0 ${({ $indent = 2 }) => $indent}px;
  border-radius: 3px;

  span:last-child {
    margin-left: auto;
  }
`

const SizeGrip = styled.span`
  align-self: flex-end;
  width: 12px;
  height: 12px;
  background: radial-gradient(circle at 1px 1px, #999 1px, transparent 1px) 0 0 / 4px 4px;
  clip-path: polygon(100% 0, 100% 100%, 0 100%);
`

const Annotations = styled.svg`
  position: absolute;
  top: -1px;
  left: -1px;
  width: 1px;
  height: 1px;
  overflow: visible;
  fill: none;
  stroke: #ea0a0a;
  stroke-width: 5px;
  stroke-linecap: round;
  stroke-linejoin: round;
  pointer-events: none;
`

const Callout = styled.span`
  position: absolute;
  top: ${({ $y }) => $y - 1}px;
  left: ${({ $x }) => $x - 1}px;
  width: 40px;
  height: 40px;
  border-radius: 50%;
  background: #ea0a0a;
  color: #fff;
  font-family: "Noto Sans", sans-serif;
  font-size: 28px;
  line-height: 40px;
  text-align: center;
`
